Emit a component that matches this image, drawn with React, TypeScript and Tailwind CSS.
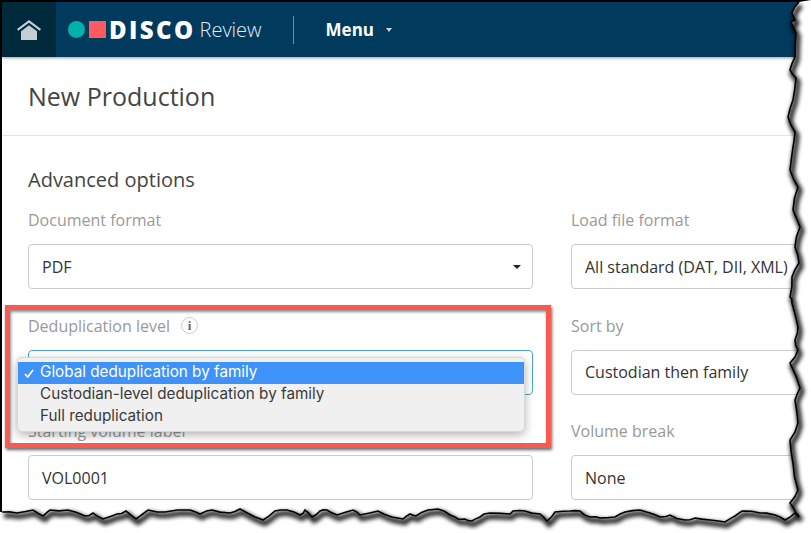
const TORN: [number, number][] = [
  [799, 2], [792, 13], [795, 20], [791, 22], [796, 33], [795, 57], [790, 70], [796, 78], [793, 100], [788, 117],
  [795, 132], [793, 147], [790, 170], [798, 187], [793, 210], [800, 227], [795, 247], [799, 263], [792, 277], [790, 297],
  [792, 303], [798, 327], [795, 340], [798, 350], [790, 363], [800, 388], [795, 400], [798, 423], [790, 440], [793, 463],
  [798, 490], [790, 503], [796, 513], [799, 517],
  [795, 513], [785, 520], [775, 515], [760, 513], [742, 511], [735, 516], [725, 522], [710, 520], [695, 518], [685, 520],
  [670, 515], [660, 517], [650, 513], [640, 510], [625, 512], [615, 517], [600, 518], [590, 517], [580, 511], [570, 511],
  [555, 512], [547, 521], [540, 514], [525, 511], [513, 511], [510, 514], [490, 513], [480, 517], [472, 521], [465, 519],
  [458, 519], [450, 515], [438, 509], [428, 510], [416, 516], [410, 514], [403, 519], [392, 517], [378, 511], [360, 515],
  [353, 510], [337, 515], [327, 510], [320, 511], [312, 517], [305, 510], [300, 515], [287, 510], [275, 511], [263, 520],
  [255, 517], [240, 509], [230, 513], [212, 510], [200, 514], [190, 510], [165, 512], [148, 510], [136, 519], [126, 511],
  [117, 514], [103, 519], [93, 513], [85, 516], [68, 510], [50, 510], [43, 516], [33, 510], [17, 513], [2, 512],
]

// adds small jitter between the traced points so the edge looks torn
function tornPoints() {
  const out: string[] = []
  let seed = 11
  const rand = () => {
    seed = (seed * 16807) % 2147483647
    return seed / 2147483647 - 0.5
  }
  TORN.forEach((p, i) => {
    const next = TORN[i + 1]
    out.push(`${p[0]},${p[1]}`)
    if (!next) return
    const x = (p[0] + next[0]) / 2 + rand() * 2
    const y = (p[1] + next[1]) / 2 + rand() * 2
    out.push(`${x.toFixed(1)},${y.toFixed(1)}`)
  })
  return out
}

function TornEdge() {
  const line = tornPoints().join(' ')
  const mask = `M${line.replace(/ /g, ' L')} L0,512 L0,533 L811,533 L811,0 Z`
  return (
    <svg className="absolute inset-0 pointer-events-none" width="811" height="533" viewBox="0 0 811 533">
      <defs>
        <filter id="tornBlur" x="-5%" y="-5%" width="110%" height="110%">
          <feGaussianBlur stdDeviation="2" />
        </filter>
      </defs>
      <path d={mask} fill="#fff" />
      <polyline points={line} fill="none" stroke="#000" strokeWidth="5" opacity="0.9" filter="url(#tornBlur)" transform="translate(2 3.5)" />
      <polyline points={line} fill="none" stroke="#000" strokeWidth="1.6" />
    </svg>
  )
}

function HomeIcon() {
  return (
    <svg width="24" height="20" viewBox="0 0 24 20" fill="#c3ced4">
      <path d="M12 0 L24 9 L22.8 10.8 L12 2.8 L1.2 10.8 L0 9 Z" />
      <path d="M12 5.2 L20 11.2 V20 H4 V11.2 Z" />
    </svg>
  )
}

function Field({ label, value, focus, info, caret }: { label: string; value?: string; focus?: boolean; info?: boolean; caret?: boolean }) {
  return (
    <div className="w-[505px] shrink-0">
      <div className="flex items-center h-[20px] text-[16px] text-[#999] mb-[14px]">
        {label}
        {info && (
          <span className="ml-[11px] w-[17px] h-[17px] rounded-full border border-[#ccc] flex items-center justify-center text-[13px] font-bold text-[#666] font-['Liberation_Serif',serif]">
            i
          </span>
        )}
      </div>
      <div
        className={`relative h-[45px] rounded-[4px] border flex items-center px-[13px] text-[16px] text-[#333] ${
          focus ? 'border-[#4aa8c7]' : 'border-[#ccc]'
        }`}
      >
        {value}
        {caret && (
          <span className="absolute right-[11px] top-[20px] w-0 h-0 border-x-[4px] border-x-transparent border-t-[4px] border-t-[#222]" />
        )}
      </div>
    </div>
  )
}

export default function App() {
  return (
    <div className="relative w-[811px] h-[533px] overflow-hidden bg-white font-['Open_Sans',sans-serif]">
      <div className="h-full border-t-2 border-l-2 border-black">
        {/* Header */}
        <div className="relative flex items-center h-[55px] bg-[#003a5d] shadow-[0_1px_3px_rgba(0,0,0,0.4)] text-white">
          <div className="flex items-center justify-center w-[54px] h-full bg-[#002a3b]">
            <HomeIcon />
          </div>
          <div className="flex items-center ml-[12px]">
            <span className="w-[17px] h-[17px] rounded-full bg-[#00b2a9]" />
            <span className="ml-[4px] w-[17px] h-[17px] bg-[#ff5a5f]" />
            <span className="ml-[3px] text-[24px] font-extrabold tracking-[2.4px] leading-none">DISCO</span>
            <span className="ml-[4px] text-[20px] font-light leading-none text-[#e6ecf0]">Review</span>
          </div>
          <div className="ml-[31px] w-px h-[28px] bg-[#6f8ea3]" />
          <div className="ml-[32px] text-[17px] font-bold">Menu</div>
          <span className="ml-[12px] w-0 h-0 border-x-[3px] border-x-transparent border-t-[4px] border-t-[#c9d4db]" />
        </div>

        {/* Title */}
        <div className="h-[79px] border-b border-[#e3e3e3] flex items-center pl-[26px] pt-[2px] text-[25px] text-[#444]">
          New Production
        </div>

        {/* Form */}
        <div className="px-[26px] pt-[29px]">
          <h2 className="h-[29px] flex items-center text-[20px] text-[#444] mb-[16px]">Advanced options</h2>
          <div className="flex flex-col gap-y-[26.5px]">
            <div className="flex gap-x-[38px]">
              <Field label="Document format" value="PDF" caret />
              <Field label="Load file format" value="All standard (DAT, DII, XML)" />
            </div>
            <div className="flex gap-x-[38px]">
              <Field label="Deduplication level" focus info />
              <Field label="Sort by" value="Custodian then family" />
            </div>
            <div className="flex gap-x-[38px]">
              <Field label="Starting volume label" value="VOL0001" />
              <Field label="Volume break" value="None" />
            </div>
          </div>
        </div>
      </div>

      {/* Native select menu */}
      <div className="absolute left-[17px] top-[357px] w-[508px] h-[75px] pt-[4px] rounded-[5px] bg-[#f0f0f0] border border-[#d8d8d8] shadow-[0_3px_10px_rgba(0,0,0,0.3)] text-[15.25px] text-[#3a3a3a] font-['Inter',sans-serif]">
        <div className="relative flex items-center h-[22px] pl-[22px] pb-[2px] bg-[#3f92f7] text-white">
          <svg className="absolute left-[6px] top-[7px]" width="10" height="9" viewBox="0 0 10 9" fill="none" stroke="#fff" strokeWidth="1.7">
            <path d="M1 5 L3.7 8 L9 1" />
          </svg>
          Global deduplication by family
        </div>
        <div className="flex items-center h-[22px] pl-[22px] pb-[2px]">Custodian-level deduplication by family</div>
        <div className="flex items-center h-[22px] pl-[22px] pb-[2px]">Full reduplication</div>
      </div>

      {/* Callout box */}
      <div className="absolute left-[5px] top-[305px] w-[546px] h-[143px] border-[5px] border-[#f95a50] shadow-[1px_2px_3px_rgba(0,0,0,0.6),inset_1px_2px_3px_rgba(0,0,0,0.45)]" />

      <TornEdge />
    </div>
  )
}
